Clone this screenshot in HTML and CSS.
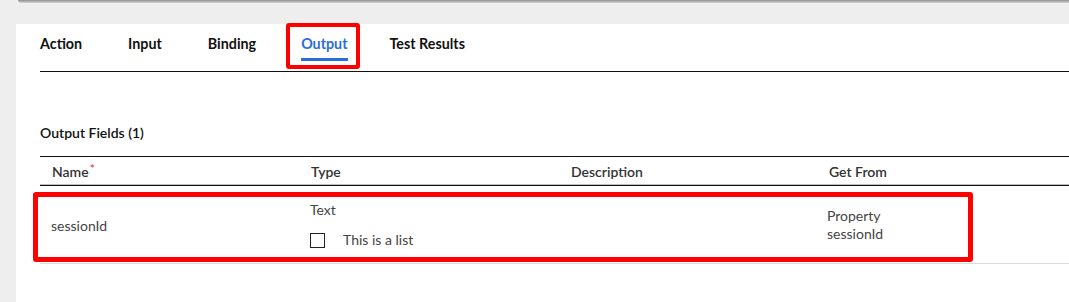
FILE: index.html
```html
<!DOCTYPE html>
<html lang="en">
<head>
<meta charset="UTF-8">
<meta name="viewport" content="width=device-width, initial-scale=1.0">
<title>Output Fields</title>
<link rel="stylesheet" href="styles.css">
</head>
<body>

<div class="card-edge"></div>

<div class="panel">
    <div class="tabs">
        <div class="tab">Action</div>
        <div class="tab">Input</div>
        <div class="tab">Binding</div>
        <div class="tab active">
            Output
            <span class="underline"></span>
            <span class="mark"></span>
        </div>
        <div class="tab">Test Results</div>
    </div>

    <h3 class="section-title">Output Fields (1)</h3>

    <div class="table">
        <div class="table-head">
            <div class="th">Name<span class="req">*</span></div>
            <div class="th">Type</div>
            <div class="th">Description</div>
            <div class="th">Get From</div>
            <div class="th"></div>
        </div>
        <div class="table-row">
            <div class="td td-name">sessionId</div>
            <div class="td td-type">
                <div>Text</div>
                <label class="list-check"><span class="box"></span>This is a list</label>
            </div>
            <div class="td"></div>
            <div class="td td-from">
                <div>Property</div>
                <div>sessionId</div>
            </div>
            <div class="td"></div>
            <span class="row-mark"></span>
        </div>
    </div>
</div>

</body>
</html>
```

FILE: styles.css
```css
body {
    margin: 0;
    background-color: #eeeeee;
    font-family: Lato, "Open Sans", sans-serif;
    color: #222;
    overflow: hidden;
}
.card-edge {
    margin-left: 18px;
    height: 3px;
    background: linear-gradient(#8e8e8e, #d6d6d6);
    border-bottom-left-radius: 3px;
}
.panel {
    margin: 21px 0 0 16px;
    height: 278px;
    background-color: #fff;
    padding-left: 24px;
}

/* Tabs */
.tabs {
    display: flex;
    gap: 46px;
    height: 47px;
    border-bottom: 1px solid #111;
}
.tab {
    position: relative;
    padding-top: 10px;
    font-size: 14.3px;
    font-weight: 700;
    line-height: 20px;
    color: #111;
    height: fit-content;
}
.tab.active {
    margin-left: -1px;
    margin-right: -4px;
    color: #2b6ed9;
}
.underline {
    display: block;
    margin-top: 4px;
    height: 3px;
    background-color: #2b6ed9;
}
.mark {
    position: absolute;
    top: -1px;
    left: -15px;
    right: -12px;
    bottom: -8px;
    border: 4px solid #ff0000;
    border-radius: 3px;
}

.section-title {
    margin: 52px 0 0;
    font-size: 14px;
    font-weight: 600;
    line-height: 18px;
    color: #111;
}

/* Table */
.table {
    margin-top: 14px;
    border-top: 1px solid #111;
}
.table-head,
.table-row {
    display: grid;
    grid-template-columns: 259px 260px 258px 259px 1fr;
}
.table-head {
    height: 27px;
    border-bottom: 1px solid #bdbdbd;
}
.th {
    padding: 6px 0 0 12px;
    font-size: 14px;
    font-weight: 600;
    line-height: 18px;
    color: #333;
}
.req {
    color: #e8413c;
    font-size: 12px;
    line-height: 0;
    vertical-align: 4px;
    margin-left: 1px;
}
.table-row {
    position: relative;
    height: 77px;
    border-top: 1px solid #111;
    border-bottom: 1px solid #dddddd;
}
.td {
    font-size: 14px;
    line-height: 18px;
    color: #444;
}
.td-name {
    padding: 31px 0 0 11px;
}
.td-type {
    padding: 15px 0 0 11px;
}
.list-check {
    display: flex;
    align-items: center;
    gap: 18px;
    margin-top: 12px;
}
.box {
    width: 13px;
    height: 13px;
    border: 1.5px solid #222;
}
.td-from {
    padding: 21px 0 0 10px;
}
.row-mark {
    position: absolute;
    top: 6px;
    bottom: 1px;
    left: -7px;
    width: 930px;
    border: 5px solid #ff0000;
    border-radius: 3px;
}
```
